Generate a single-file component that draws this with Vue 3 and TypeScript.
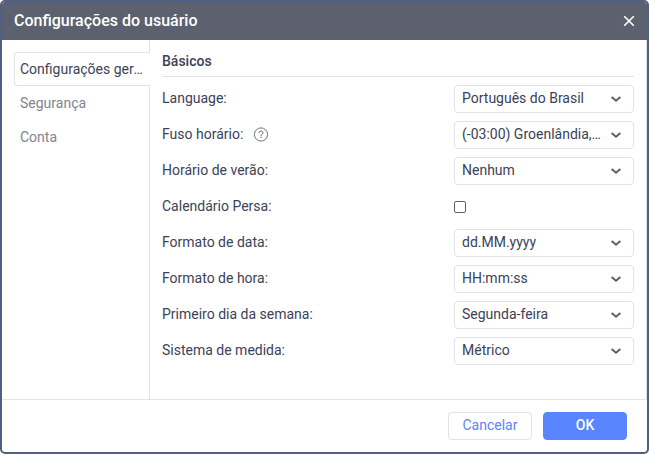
<script setup lang="ts">
import { reactive, ref } from 'vue'

interface Field {
  id: string
  label: string
  kind: 'select' | 'checkbox'
  options?: string[]
  help?: boolean
}

const tabs: string[] = ['Configurações gerais', 'Segurança', 'Conta']
const activeTab = ref(0)

const fields: Field[] = [
  { id: 'language', label: 'Language:', kind: 'select', options: ['Português do Brasil'] },
  { id: 'timezone', label: 'Fuso horário:', kind: 'select', options: ['(-03:00) Groenlândia, Brasília'], help: true },
  { id: 'dst', label: 'Horário de verão:', kind: 'select', options: ['Nenhum'] },
  { id: 'persian', label: 'Calendário Persa:', kind: 'checkbox' },
  { id: 'date-format', label: 'Formato de data:', kind: 'select', options: ['dd.MM.yyyy'] },
  { id: 'time-format', label: 'Formato de hora:', kind: 'select', options: ['HH:mm:ss'] },
  { id: 'first-day', label: 'Primeiro dia da semana:', kind: 'select', options: ['Segunda-feira'] },
  { id: 'units', label: 'Sistema de medida:', kind: 'select', options: ['Métrico'] },
]

const values = reactive<Record<string, string>>(
  Object.fromEntries(fields.filter((f) => f.options).map((f) => [f.id, f.options![0]])),
)
const persian = ref(false)
</script>

<template>
  <form class="dialog" @submit.prevent>
    <header class="title-bar">
      <h1>Configurações do usuário</h1>
      <button type="button" class="close">
        <svg width="12" height="12" viewBox="0 0 12 12" fill="none" stroke="currentColor" stroke-width="1.6">
          <path d="M1.2 1.2 10.8 10.8M10.8 1.2 1.2 10.8" />
        </svg>
      </button>
    </header>

    <div class="body">
      <nav class="tabs">
        <button
          v-for="(tab, i) in tabs"
          :key="tab"
          type="button"
          class="tab"
          :class="{ active: i === activeTab }"
          @click="activeTab = i"
        >
          {{ tab }}
        </button>
      </nav>

      <section class="content">
        <h2>Básicos</h2>
        <div v-for="field in fields" :key="field.id" class="row">
          <div class="caption">
            <label :for="field.id">{{ field.label }}</label>
            <svg v-if="field.help" class="help" width="16" height="16" viewBox="0 0 16 16" fill="none" stroke="currentColor">
              <circle cx="8" cy="8.5" r="6.6" stroke-width="0.9" />
              <path d="M6 7C6 5.7 6.9 5 8 5s2 .7 2 1.8c0 1.4-1.9 1.5-1.9 3" />
              <path d="M8.1 10.8v1.2" stroke-width="1.2" />
            </svg>
          </div>
          <div class="control">
            <template v-if="field.kind === 'select'">
              <select :id="field.id" v-model="values[field.id]">
                <option v-for="o in field.options" :key="o" :value="o">{{ o }}</option>
              </select>
              <svg class="chevron" width="12" height="8" viewBox="0 0 12 8" fill="none" stroke="currentColor" stroke-width="2">
                <path d="M1.6 2 6 5.8 10.4 2" />
              </svg>
            </template>
            <input v-else :id="field.id" v-model="persian" type="checkbox" />
          </div>
        </div>
      </section>
    </div>

    <footer class="actions">
      <button type="button" class="btn">Cancelar</button>
      <button type="submit" class="btn primary">OK</button>
    </footer>
  </form>
</template>

<style>
body {
  margin: 0;
  background: #fff;
}
</style>

<style scoped>
.dialog {
  box-sizing: border-box;
  display: flex;
  flex-direction: column;
  min-height: 100vh;
  border: 2px solid #4f6080;
  border-radius: 5px;
  overflow: hidden;
  background: #fff;
  color: #3b4257;
  font: 14px/20px Roboto, 'Liberation Sans', sans-serif;
}

button,
select {
  font: inherit;
  color: inherit;
  cursor: pointer;
}

.title-bar {
  display: flex;
  align-items: center;
  justify-content: space-between;
  height: 38px;
  padding: 0 12px;
  background: #5c6170;
  color: #fff;
}

h1 {
  margin: 0;
  font-size: 16px;
  font-weight: 500;
  line-height: 20px;
}

.close {
  display: flex;
  padding: 0;
  border: 0;
  background: none;
}

.body {
  flex: 1;
  display: flex;
}

.tabs {
  box-sizing: border-box;
  flex: none;
  width: 148px;
  display: flex;
  flex-direction: column;
  padding: 12px 0 0 12px;
  background: linear-gradient(#e1e2e4, #e1e2e4) right / 1px 100% no-repeat;
}

.tab {
  box-sizing: border-box;
  height: 34px;
  padding: 0 6px 0 5px;
  border: 1px solid transparent;
  border-right: 0;
  border-radius: 4px 0 0 4px;
  background: none;
  color: #80848f;
  text-align: left;
  white-space: nowrap;
  overflow: hidden;
  text-overflow: ellipsis;
}

.tab.active {
  border-color: #e1e2e4;
  background: #fff;
  color: #3b4257;
}

.content {
  flex: 1;
  min-width: 0;
  padding: 0 12px;
  border-right: 1px solid #e1e2e4;
}

h2 {
  margin: 0 0 4px;
  padding: 11px 0 5px;
  border-bottom: 1px solid #e1e2e4;
  font-size: 14px;
  font-weight: 500;
  line-height: 20px;
}

.row {
  display: flex;
  align-items: center;
  justify-content: space-between;
  height: 36px;
}

.caption {
  display: flex;
  align-items: center;
  gap: 10px;
  padding-bottom: 2px;
}

.help {
  color: #5c6170;
}

.control {
  position: relative;
  display: flex;
  align-items: center;
  width: 180px;
}

select {
  appearance: none;
  box-sizing: border-box;
  width: 100%;
  height: 28px;
  margin: 0;
  padding: 0 32px 2px 7px;
  border: 1px solid #e1e2e4;
  border-radius: 4px;
  background: #fff;
  overflow: hidden;
  white-space: nowrap;
  text-overflow: ellipsis;
}

.chevron {
  position: absolute;
  right: 12px;
  color: #5c6170;
  pointer-events: none;
}

input[type='checkbox'] {
  appearance: none;
  box-sizing: border-box;
  width: 12px;
  height: 12px;
  margin: 0;
  border: 1px solid #5c6170;
  border-radius: 2px;
  background: #fff;
}

input[type='checkbox']:checked {
  background: #5985ff;
}

.actions {
  display: flex;
  justify-content: flex-end;
  gap: 11px;
  padding: 12px 20px;
  border-top: 1px solid #e1e2e4;
}

.btn {
  box-sizing: border-box;
  width: 84px;
  height: 28px;
  padding: 0 0 2px;
  border: 1px solid #e1e2e4;
  border-radius: 4px;
  background: #fff;
  color: #5985ff;
}

.btn.primary {
  border-color: #5985ff;
  background: #5985ff;
  color: #fff;
  font-weight: 500;
}
</style>
